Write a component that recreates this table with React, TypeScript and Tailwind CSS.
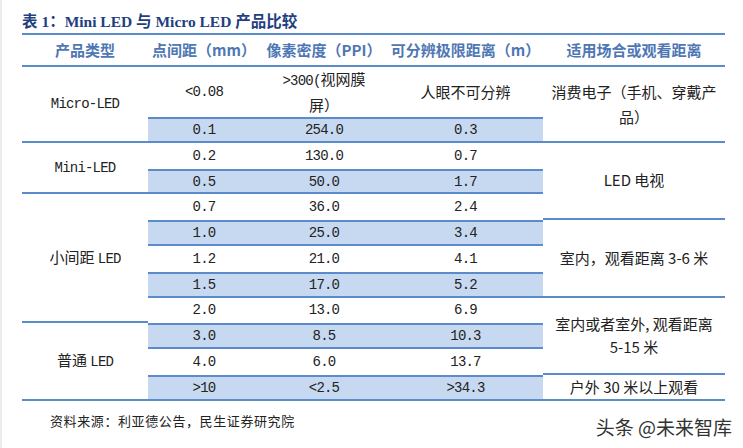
import React from "react";

const Mono = ({ children }: { children: React.ReactNode }) => (
  <span className="font-['Liberation_Mono',monospace] text-[14px] tracking-[-0.8px]">{children}</span>
);

type Row = { a: string; b: string; c: string; blue: boolean };

const rows: Row[] = [
  { a: "0.1", b: "254.0", c: "0.3", blue: true },
  { a: "0.2", b: "130.0", c: "0.7", blue: false },
  { a: "0.5", b: "50.0", c: "1.7", blue: true },
  { a: "0.7", b: "36.0", c: "2.4", blue: false },
  { a: "1.0", b: "25.0", c: "3.4", blue: true },
  { a: "1.2", b: "21.0", c: "4.1", blue: false },
  { a: "1.5", b: "17.0", c: "5.2", blue: true },
  { a: "2.0", b: "13.0", c: "6.9", blue: false },
  { a: "3.0", b: "8.5", c: "10.3", blue: true },
  { a: "4.0", b: "6.0", c: "13.7", blue: false },
  { a: ">10", b: "<2.5", c: ">34.3", blue: true },
];

const cellBase = "flex items-center justify-center text-center";
const blueCls = "bg-[#c6d9f1] border-y-2 border-[#5b8bcb]";
const line = "border-[#5b8bcb]";

function DataCells({ r }: { r: Row }) {
  const cls = `${cellBase} ${r.blue ? blueCls : ""}`;
  return (
    <>
      <div className={cls}><Mono>{r.a}</Mono></div>
      <div className={cls}><Mono>{r.b}</Mono></div>
      <div className={cls}><Mono>{r.c}</Mono></div>
    </>
  );
}

export default function App() {
  return (
    <div className="w-[743px] h-[448px] bg-white border-l-2 border-[#ececec] pt-[11px] font-['Noto_Sans_CJK_SC',sans-serif] text-[#222]">
      <div className="h-[22px] flex items-center pl-[20px] font-['Liberation_Serif','Noto_Sans_CJK_SC',serif] font-bold text-[15.5px] text-[#1f3f80]">
        表 1：Mini LED 与 Micro LED 产品比较
      </div>
      <div
        className={`ml-[20px] w-[703px] grid grid-cols-[126px_112px_128px_155px_182px] grid-rows-[32px_50px_repeat(11,25.8px)] border-t-2 ${line} text-[15px] leading-[24px]`}
      >
        {/* header */}
        {["产品类型", "点间距（mm）", "像素密度（PPI）", "可分辨极限距离（m）", "适用场合或观看距离"].map((h) => (
          <div key={h} className={`${cellBase} border-b-2 ${line} font-bold text-[#4f77b4]`}>
            {h}
          </div>
        ))}

        {/* Micro-LED row 1 */}
        <div className={`${cellBase} row-span-2 border-b-2 ${line}`}><Mono>Micro-LED</Mono></div>
        <div className={cellBase}><Mono>&lt;0.08</Mono></div>
        <div className={cellBase}>
          <span>
            <Mono>&gt;300(</Mono>视网膜
            <br />
            屏）
          </span>
        </div>
        <div className={cellBase}>人眼不可分辨</div>
        <div className={`${cellBase} row-span-2 border-b-2 ${line} leading-[25px]`}>
          <span>
            消费电子（手机、穿戴产
            <br />
            品）
          </span>
        </div>

        {/* 0.1 */}
        <DataCells r={rows[0]} />

        {/* 0.2 */}
        <div className={`${cellBase} row-span-2 border-b-2 ${line}`}><Mono>Mini-LED</Mono></div>
        <DataCells r={rows[1]} />
        <div className={`${cellBase} row-span-3 border-b-2 ${line}`}>LED 电视</div>

        {/* 0.5 */}
        <DataCells r={rows[2]} />

        {/* 0.7 */}
        <div className={`${cellBase} row-span-5 border-b-2 ${line}`}>
          <span>小间距 <Mono>LED</Mono></span>
        </div>
        <DataCells r={rows[3]} />

        {/* 1.0 */}
        <DataCells r={rows[4]} />
        <div className={`${cellBase} row-span-3 border-b-2 ${line}`}>室内，观看距离 3-6 米</div>

        {/* 1.2 */}
        <DataCells r={rows[5]} />
        {/* 1.5 */}
        <DataCells r={rows[6]} />

        {/* 2.0 */}
        <DataCells r={rows[7]} />
        <div className={`${cellBase} row-span-3 border-b-2 ${line} leading-[23px]`}>
          <span>
            室内或者室外, 观看距离
            <br />
            5-15 米
          </span>
        </div>

        {/* 3.0 */}
        <div className={`${cellBase} row-span-3 border-b-2 ${line}`}>
          <span>普通 <Mono>LED</Mono></span>
        </div>
        <DataCells r={rows[8]} />

        {/* 4.0 */}
        <DataCells r={rows[9]} />

        {/* >10 */}
        <DataCells r={rows[10]} />
        <div className={`${cellBase} border-b-2 ${line}`}>户外 30 米以上观看</div>
      </div>

      <div className="flex justify-between items-start pl-[48px] pr-[11px]">
        <div className="mt-[10px] h-[20px] leading-[20px] text-[13px] tracking-[0.6px] text-[#222]">
          资料来源：利亚德公告，民生证券研究院
        </div>
        <div className="mt-[13px] h-[26px] leading-[26px] text-[19px] text-[#333]">头条 @未来智库</div>
      </div>
    </div>
  );
}
